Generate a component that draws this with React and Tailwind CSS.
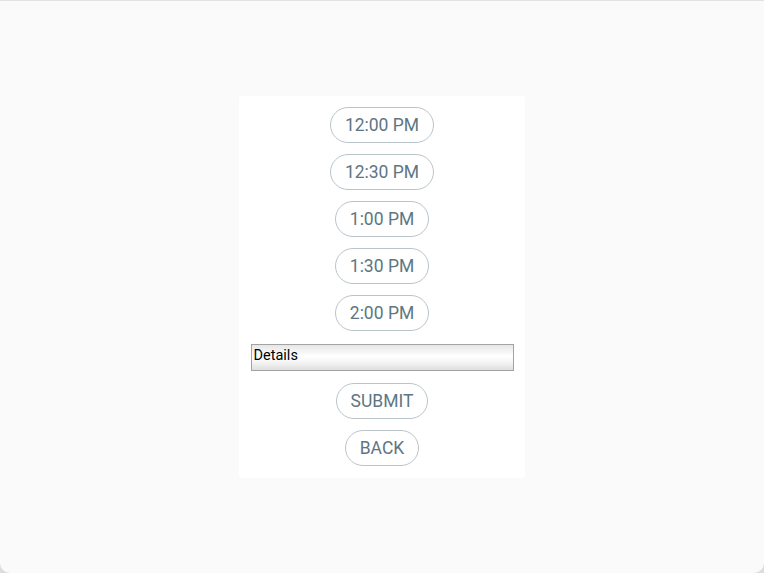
import React from "react";

const times = ["12:00 PM", "12:30 PM", "1:00 PM", "1:30 PM", "2:00 PM"];

const PillButton = ({ children }) => (
  <button
    type="button"
    className="h-9 rounded-full border border-[#b9c4ca] bg-white px-[14px] pt-[1px] text-[17.5px] leading-none text-[#5e7682]"
    style={{ fontFamily: "Roboto, 'Noto Sans', sans-serif" }}
  >
    {children}
  </button>
);

const App = () => {
  return (
    <div className="h-[573px] w-[764px] overflow-hidden bg-[#dcdcdc]">
      <div className="flex h-full flex-col items-center justify-center rounded-b-[10px] border-t border-[#e2e2e2] bg-[#fafafa]">
        {/* booking card */}
        <div className="flex w-[286px] flex-col items-center rounded-[3px] bg-white pt-[11px] pb-[12px]">
          <div className="flex flex-col items-center gap-[11px]">
            {times.map((t) => (
              <PillButton key={t}>{t}</PillButton>
            ))}
          </div>

          <div
            className="mt-[13px] h-[27px] w-[263px] border border-[#a3a3a3] bg-[linear-gradient(to_bottom,#e6e6e6_0%,#ffffff_45%,#f4f4f4_70%,#dedede_100%)] px-[2px] pt-[2px] text-[14.5px] leading-[18px] text-black"
            style={{ fontFamily: "Roboto, 'Liberation Sans', sans-serif" }}
          >
            Details
          </div>

          <div className="mt-[12px] flex flex-col items-center gap-[11px]">
            <PillButton>SUBMIT</PillButton>
            <PillButton>BACK</PillButton>
          </div>
        </div>
      </div>
    </div>
  );
};

export default App;
